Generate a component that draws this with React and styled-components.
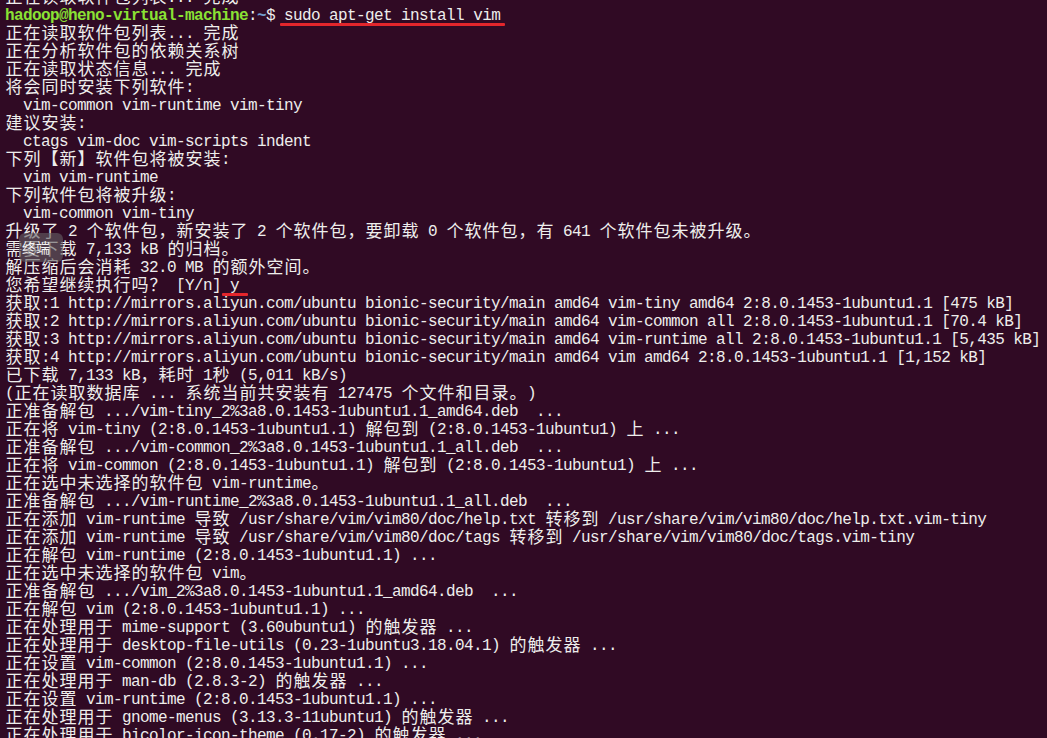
import React from 'react';
import styled, { createGlobalStyle } from 'styled-components';

const BG = '#300a24';

const GlobalStyle = createGlobalStyle`
  html, body {
    margin: 0;
    padding: 0;
    background: ${BG};
  }
  body {
    overflow: hidden;
  }
`;

const Screen = styled.div`
  position: relative;
  width: 1047px;
  height: 738px;
  overflow: hidden;
  background: ${BG};
`;

const Output = styled.div`
  margin-top: -11px;
  padding-left: 5px;
  font-family: 'Liberation Mono', 'DejaVu Sans Mono', monospace;
  font-size: 16px;
  letter-spacing: -0.6px;
  line-height: 18px;
  color: #eeeeec;
  white-space: pre;
`;

const Row = styled.div`
  height: 18px;
`;

const Wide = styled.span`
  display: inline-block;
  width: 18px;
  height: 18px;
  vertical-align: top;
  font-family: 'Noto Sans CJK SC', 'Noto Sans CJK JP', sans-serif;
  font-size: 17px;
  letter-spacing: 0;
  line-height: 14px;
  text-align: center;
`;

const Tint = styled.span`
  color: ${(p) => p.$color || 'inherit'};
  font-weight: ${(p) => (p.$bold ? 700 : 400)};
`;

const Marked = styled.span`
  position: relative;
  &::after {
    content: '';
    position: absolute;
    left: ${(p) => p.$left}px;
    right: ${(p) => p.$right}px;
    top: 16px;
    height: 3px;
    background: #e3262c;
    border-radius: 1px;
  }
`;

const Tooltip = styled.div`
  position: absolute;
  left: 19px;
  top: 233px;
  width: 44px;
  height: 29px;
  box-sizing: border-box;
  padding: 6px 0 0 3px;
  border-radius: 6px;
  background: rgba(100, 96, 100, 0.62);
  color: #f4f4f4;
  font-family: 'Noto Sans CJK SC', sans-serif;
  font-size: 14px;
  line-height: 16px;
`;

const isWide = (ch) => {
  const c = ch.codePointAt(0);
  return (
    (c >= 0x2e80 && c <= 0x9fff) ||
    (c >= 0xf900 && c <= 0xfaff) ||
    (c >= 0xff00 && c <= 0xff60) ||
    (c >= 0xffe0 && c <= 0xffe6)
  );
};

// split a string into ascii runs and double-width cjk cells
function cells(text, keyBase) {
  const out = [];
  let run = '';
  let i = 0;
  for (const ch of text) {
    if (isWide(ch)) {
      if (run) {
        out.push(run);
        run = '';
      }
      out.push(<Wide key={`${keyBase}-${i}`}>{ch}</Wide>);
    } else {
      run += ch;
    }
    i++;
  }
  if (run) out.push(run);
  return out;
}

const GREEN = '#8ae234';
const BLUE = '#729fcf';

const LINES = [
  '正在读取软件包列表... 完成',
  'PROMPT',
  '正在读取软件包列表... 完成',
  '正在分析软件包的依赖关系树',
  '正在读取状态信息... 完成',
  '将会同时安装下列软件:',
  '  vim-common vim-runtime vim-tiny',
  '建议安装:',
  '  ctags vim-doc vim-scripts indent',
  '下列【新】软件包将被安装:',
  '  vim vim-runtime',
  '下列软件包将被升级:',
  '  vim-common vim-tiny',
  '升级了 2 个软件包，新安装了 2 个软件包，要卸载 0 个软件包，有 641 个软件包未被升级。',
  '需要下载 7,133 kB 的归档。',
  '解压缩后会消耗 32.0 MB 的额外空间。',
  'CONFIRM',
  '获取:1 http://mirrors.aliyun.com/ubuntu bionic-security/main amd64 vim-tiny amd64 2:8.0.1453-1ubuntu1.1 [475 kB]',
  '获取:2 http://mirrors.aliyun.com/ubuntu bionic-security/main amd64 vim-common all 2:8.0.1453-1ubuntu1.1 [70.4 kB]',
  '获取:3 http://mirrors.aliyun.com/ubuntu bionic-security/main amd64 vim-runtime all 2:8.0.1453-1ubuntu1.1 [5,435 kB]',
  '获取:4 http://mirrors.aliyun.com/ubuntu bionic-security/main amd64 vim amd64 2:8.0.1453-1ubuntu1.1 [1,152 kB]',
  '已下载 7,133 kB，耗时 1秒 (5,011 kB/s)',
  '(正在读取数据库 ... 系统当前共安装有 127475 个文件和目录。)',
  '正准备解包 .../vim-tiny_2%3a8.0.1453-1ubuntu1.1_amd64.deb  ...',
  '正在将 vim-tiny (2:8.0.1453-1ubuntu1.1) 解包到 (2:8.0.1453-1ubuntu1) 上 ...',
  '正准备解包 .../vim-common_2%3a8.0.1453-1ubuntu1.1_all.deb  ...',
  '正在将 vim-common (2:8.0.1453-1ubuntu1.1) 解包到 (2:8.0.1453-1ubuntu1) 上 ...',
  '正在选中未选择的软件包 vim-runtime。',
  '正准备解包 .../vim-runtime_2%3a8.0.1453-1ubuntu1.1_all.deb  ...',
  '正在添加 vim-runtime 导致 /usr/share/vim/vim80/doc/help.txt 转移到 /usr/share/vim/vim80/doc/help.txt.vim-tiny',
  '正在添加 vim-runtime 导致 /usr/share/vim/vim80/doc/tags 转移到 /usr/share/vim/vim80/doc/tags.vim-tiny',
  '正在解包 vim-runtime (2:8.0.1453-1ubuntu1.1) ...',
  '正在选中未选择的软件包 vim。',
  '正准备解包 .../vim_2%3a8.0.1453-1ubuntu1.1_amd64.deb  ...',
  '正在解包 vim (2:8.0.1453-1ubuntu1.1) ...',
  '正在处理用于 mime-support (3.60ubuntu1) 的触发器 ...',
  '正在处理用于 desktop-file-utils (0.23-1ubuntu3.18.04.1) 的触发器 ...',
  '正在设置 vim-common (2:8.0.1453-1ubuntu1.1) ...',
  '正在处理用于 man-db (2.8.3-2) 的触发器 ...',
  '正在设置 vim-runtime (2:8.0.1453-1ubuntu1.1) ...',
  '正在处理用于 gnome-menus (3.13.3-11ubuntu1) 的触发器 ...',
  '正在处理用于 bicolor-icon-theme (0.17-2) 的触发器 ...',
];

function PromptRow() {
  return (
    <Row>
      <Tint $color={GREEN} $bold>hadoop@heno-virtual-machine</Tint>
      :
      <Tint $color={BLUE} $bold>~</Tint>
      {'$ '}
      <Marked $left={-4} $right={-5}>sudo apt-get install vim</Marked>
    </Row>
  );
}

function ConfirmRow() {
  return (
    <Row>
      {cells('您希望继续执行吗？ [Y/n] ', 'c')}
      <Marked $left={-8} $right={-9}>y</Marked>
    </Row>
  );
}

export default function App() {
  return (
    <Screen>
      <GlobalStyle />
      <Output>
        {LINES.map((line, idx) => {
          if (line === 'PROMPT') return <PromptRow key={idx} />;
          if (line === 'CONFIRM') return <ConfirmRow key={idx} />;
          return <Row key={idx}>{cells(line, idx)}</Row>;
        })}
      </Output>
      <Tooltip>终端</Tooltip>
    </Screen>
  );
}
